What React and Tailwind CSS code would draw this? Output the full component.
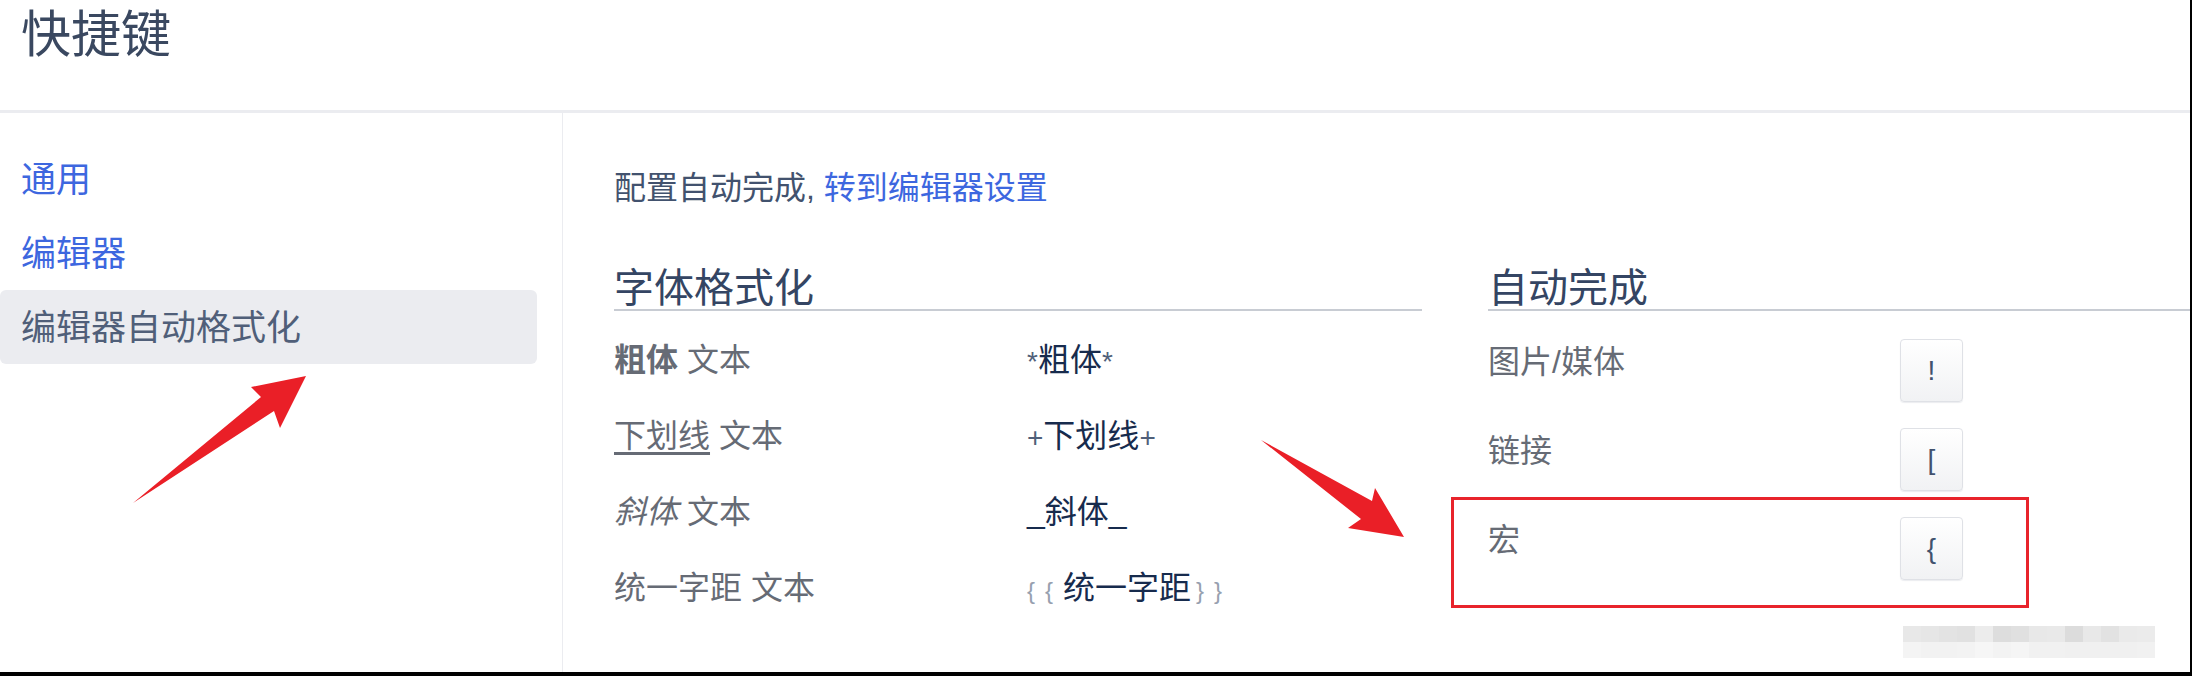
import React from "react";

const navItems = [
  { label: "通用", active: false },
  { label: "编辑器", active: false },
  { label: "编辑器自动格式化", active: true },
];

const mark = "inline-block align-middle text-[28px] text-[#505f79]";

const formatRows = [
  {
    label: (
      <>
        <span className="font-bold">粗体</span> 文本
      </>
    ),
    value: (
      <span>
        <span className={mark}>*</span>粗体<span className={mark}>*</span>
      </span>
    ),
  },
  {
    label: (
      <>
        <span className="underline underline-offset-[5px]">下划线</span> 文本
      </>
    ),
    value: (
      <span>
        <span className={mark}>+</span>下划线<span className={mark}>+</span>
      </span>
    ),
  },
  {
    label: (
      <>
        <span className="italic">斜体</span> 文本
      </>
    ),
    value: <span>_斜体_</span>,
  },
  {
    label: <>统一字距 文本</>,
    value: (
      <span>
        <span className="text-[24px] tracking-[10px] text-[#97a0af]">{"{{"}</span>
        统一字距
        <span className="ml-[5px] text-[24px] tracking-[10px] text-[#97a0af]">{"}}"}</span>
      </span>
    ),
  },
];

const autoRows = [
  { label: "图片/媒体", key: "!" },
  { label: "链接", key: "[" },
  { label: "宏", key: "{" },
];

// pixelated watermark in the bottom right corner
const mosaic = [
  "#e8e8e8", "#e6e6e6", "#e3e3e3", "#e1e1e1", "#ececec", "#dddddd", "#e0e0e0", "#e8e8e8", "#e9e9e9", "#dcdcdc", "#e8e8e8", "#e2e2e2", "#eaeaea", "#ebebeb",
  "#f4f4f4", "#f2f2f2", "#f2f2f2", "#f3f3f3", "#f6f6f6", "#f3f3f3", "#f5f5f5", "#f1f1f1", "#f1f1f1", "#f0f0f0", "#f0f0f0", "#f0f0f0", "#f0f0f0", "#f1f1f1",
];

export default function App() {
  return (
    <div className="relative flex h-[676px] w-[2192px] flex-col overflow-hidden border-r-2 border-b-4 border-black bg-white font-['Liberation_Sans','Noto_Sans_CJK_SC',sans-serif]">
      <header className="h-[113px] shrink-0 border-b-[3px] border-[#ebecf0] px-[21px] pt-[10px]">
        <h1 className="text-[50px] leading-none text-[#3a4860]">快捷键</h1>
      </header>

      <div className="flex flex-1">
        {/* Sidebar */}
        <nav className="w-[563px] shrink-0 border-r border-[#ebecf0] pt-[29px] pr-[25px]">
          {navItems.map((item) => (
            <div
              key={item.label}
              className={
                item.active
                  ? "flex h-[74px] items-center rounded-[6px] bg-[#ebecf0] px-[21px] text-[35px] leading-none text-[#505f79]"
                  : "flex h-[74px] items-center px-[21px] text-[35px] leading-none text-[#3d67df]"
              }
            >
              {item.label}
            </div>
          ))}
        </nav>

        {/* Content */}
        <main className="flex-1 pl-[51px] pt-[59px]">
          <p className="text-[32px] leading-none text-[#42526e]">
            配置自动完成, <a className="text-[#3d67df]">转到编辑器设置</a>
          </p>

          <div className="mt-[64px] flex">
            <section className="w-[808px] shrink-0">
              <h2 className="border-b-2 border-[#c8ccd3] pb-[1px] text-[40px] leading-none text-[#344563]">
                字体格式化
              </h2>
              <div className="mt-[11px]">
                {formatRows.map((row, i) => (
                  <div key={i} className="flex h-[76px] items-center text-[32px] leading-none">
                    <div className="w-[413px] text-[#666b75]">{row.label}</div>
                    <div className="text-[#172b4d]">{row.value}</div>
                  </div>
                ))}
              </div>
            </section>

            <section className="ml-[66px] flex-1">
              <h2 className="border-b-2 border-[#c8ccd3] pb-[1px] text-[40px] leading-none text-[#344563]">
                自动完成
              </h2>
              <div className="mt-[28px] flex flex-col gap-[26px]">
                {autoRows.map((row) => (
                  <div key={row.label} className="flex items-start">
                    <div className="mt-[7px] w-[412px] text-[32px] leading-none text-[#666b75]">{row.label}</div>
                    <div className="flex h-[63px] w-[63px] items-center justify-center rounded-[4px] border border-[#dfe1e6] bg-gradient-to-b from-white to-[#f1f2f4] text-[28px] text-[#42526e] shadow-[0_1px_1px_rgba(9,30,66,0.08)]">
                      {row.key}
                    </div>
                  </div>
                ))}
              </div>
            </section>
          </div>
        </main>
      </div>

      {/* annotations drawn over the screenshot */}
      <div className="pointer-events-none absolute left-[1451px] top-[497px] h-[111px] w-[578px] border-[3px] border-[#e8232b]" />

      <div className="pointer-events-none absolute left-[1903px] top-[626px] grid w-[252px] grid-cols-14 blur-[0.5px]">
        {mosaic.map((c, i) => (
          <div key={i} className="h-[16px]" style={{ backgroundColor: c }} />
        ))}
      </div>

      <svg
        className="pointer-events-none absolute left-0 top-0"
        width="2192"
        height="676"
        viewBox="0 0 2192 676"
      >
        <polygon points="133,503 261,397 251,387 306,376 280,428 274,411" fill="#ea1f27" />
        <polygon points="1261,440 1372,501 1375,488 1404,537 1348,528 1361,519" fill="#ea1f27" />
      </svg>
    </div>
  );
}
